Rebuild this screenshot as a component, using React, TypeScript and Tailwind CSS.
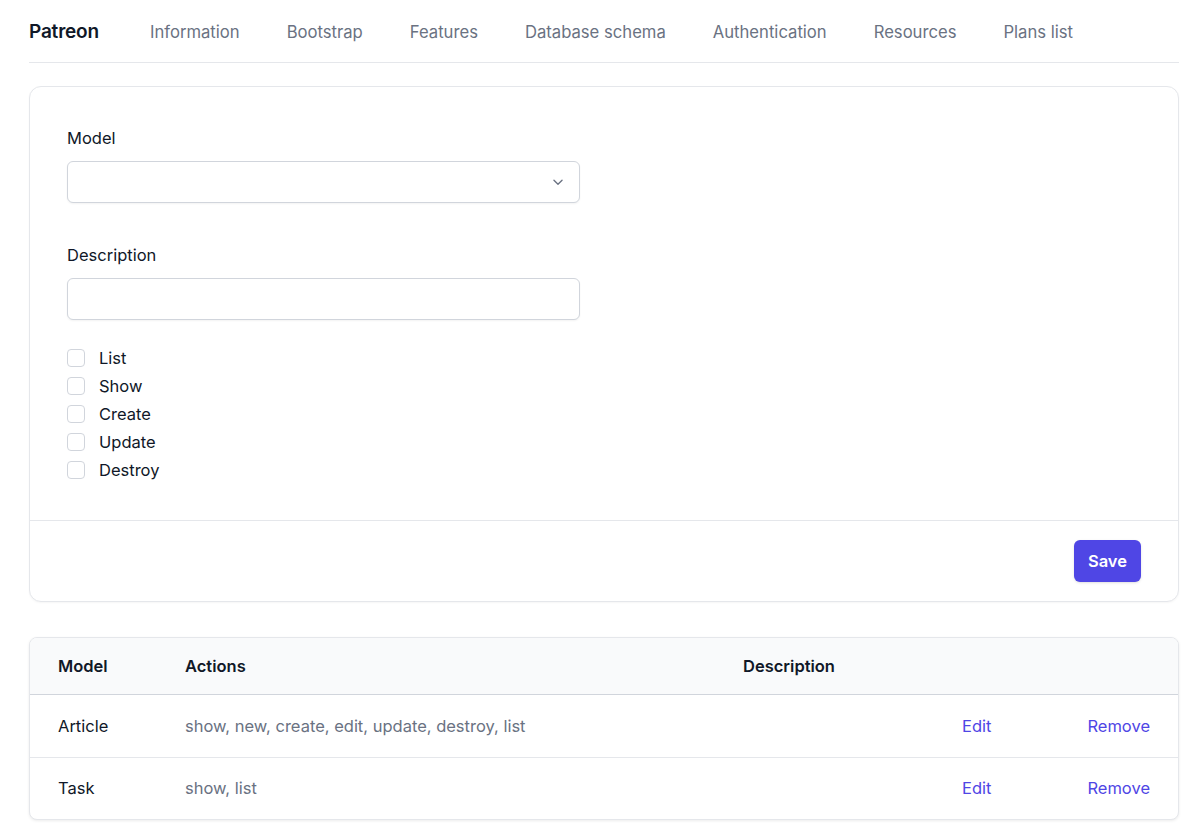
const navItems = ['Information', 'Bootstrap', 'Features', 'Database schema', 'Authentication', 'Resources', 'Plans list'];
const actions = ['List', 'Show', 'Create', 'Update', 'Destroy'];

const rows = [
  { model: 'Article', actions: 'show, new, create, edit, update, destroy, list', description: '' },
  { model: 'Task', actions: 'show, list', description: '' }
];

function Chevron() {
  return (
    <svg viewBox="0 0 20 20" className="h-[18px] w-[18px] text-gray-500" fill="none" stroke="currentColor" strokeWidth="1.5" strokeLinecap="round" strokeLinejoin="round">
      <path d="M5.5 8l4.5 4.5L14.5 8" />
    </svg>
  );
}

export default function App() {
  return (
    <div className="min-h-[830px] bg-white pl-[29px] pr-[21px] text-gray-900" style={{ fontFamily: 'Inter, "Noto Sans", sans-serif' }}>
      <nav className="flex h-[63px] items-center border-b border-gray-200 pt-[2px]">
        <span className="text-[19px] font-semibold tracking-[-0.01em] text-gray-900">Patreon</span>
        <div className="ml-[51px] flex items-center gap-[47px]">
          {navItems.map((item) => (
            <span key={item} className="text-[16.65px] text-gray-500">{item}</span>
          ))}
        </div>
      </nav>

      <div className="mt-[23px] rounded-xl border border-gray-200 bg-white shadow-[0_1px_2px_rgba(0,0,0,0.04)]">
        <div className="px-[37px] pt-[39px] pb-[36px]">
          <label className="block text-[16.5px] leading-[24px] text-gray-900">Model</label>
          <div className="mt-[11px] flex h-[42px] w-[513px] items-center justify-end rounded-md border border-gray-300 bg-white pr-[12px] shadow-[0_1px_2px_rgba(0,0,0,0.05)]">
            <Chevron />
          </div>

          <label className="mt-[40px] block text-[16.5px] leading-[24px] text-gray-900">Description</label>
          <div className="mt-[11px] h-[42px] w-[513px] rounded-md border border-gray-300 bg-white shadow-[0_1px_2px_rgba(0,0,0,0.05)]" />

          <div className="mt-[24px] flex flex-col">
            {actions.map((a) => (
              <label key={a} className="flex h-[28px] items-center gap-[14px]">
                <span className="h-[18px] w-[18px] rounded-[4px] border border-gray-300 bg-white" />
                <span className="text-[16.5px] text-gray-900">{a}</span>
              </label>
            ))}
          </div>
        </div>

        <div className="flex justify-end border-t border-gray-200 px-[37px] py-[19px]">
          <button type="button" className="h-[42px] rounded-md bg-[#4f46e5] px-[14px] text-[16.5px] font-semibold text-white shadow-sm">Save</button>
        </div>
      </div>

      <div className="mt-[35px] overflow-hidden rounded-lg border border-gray-200 bg-white shadow-[0_1px_3px_rgba(0,0,0,0.08)]">
        <div className="flex h-[57px] items-center border-b border-gray-300 bg-gray-50 px-[28px] text-[16.5px] font-semibold text-gray-900">
          <div className="w-[127px] shrink-0">Model</div>
          <div className="w-[558px] shrink-0">Actions</div>
          <div className="w-[219px] shrink-0">Description</div>
        </div>
        {rows.map((r, i) => (
          <div key={r.model} className={`flex h-[62px] items-center px-[28px] text-[16.5px] ${i > 0 ? 'border-t border-gray-200' : ''}`}>
            <div className="w-[127px] shrink-0 text-gray-900">{r.model}</div>
            <div className="w-[558px] shrink-0 text-gray-500">{r.actions}</div>
            <div className="w-[219px] shrink-0 text-gray-500">{r.description}</div>
            <div className="shrink-0 text-[#4f46e5]">Edit</div>
            <div className="ml-auto shrink-0 text-[#4f46e5]">Remove</div>
          </div>
        ))}
      </div>
    </div>
  );
}
